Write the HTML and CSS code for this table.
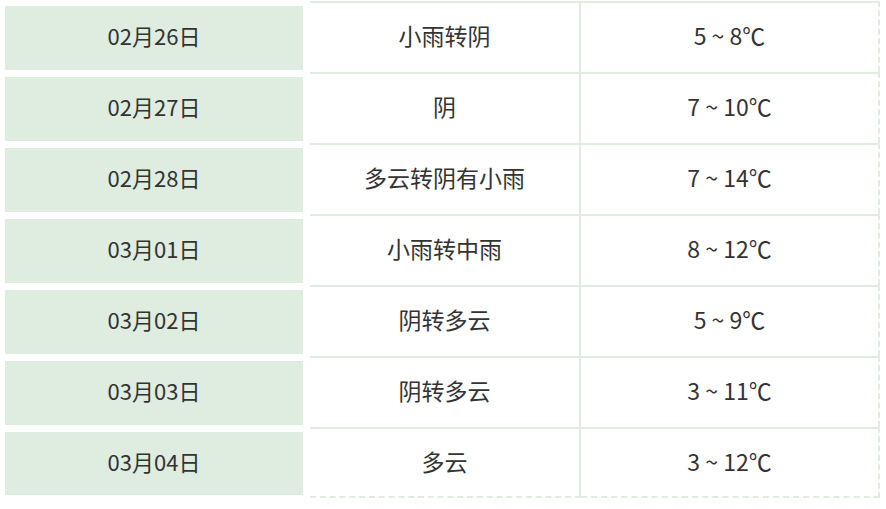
FILE: index.html
```html
<!DOCTYPE html>
<html lang="zh">
<head>
<meta charset="utf-8">
<link rel="stylesheet" href="styles.css">
</head>
<body>
<div class="table">
  <div class="row"><div class="date"><span>02月26日</span></div><div class="cell mid">小雨转阴</div><div class="cell temp">5 ~ 8℃</div></div>
  <div class="row"><div class="date"><span>02月27日</span></div><div class="cell mid">阴</div><div class="cell temp">7 ~ 10℃</div></div>
  <div class="row"><div class="date"><span>02月28日</span></div><div class="cell mid">多云转阴有小雨</div><div class="cell temp">7 ~ 14℃</div></div>
  <div class="row"><div class="date"><span>03月01日</span></div><div class="cell mid">小雨转中雨</div><div class="cell temp">8 ~ 12℃</div></div>
  <div class="row"><div class="date"><span>03月02日</span></div><div class="cell mid">阴转多云</div><div class="cell temp">5 ~ 9℃</div></div>
  <div class="row"><div class="date"><span>03月03日</span></div><div class="cell mid">阴转多云</div><div class="cell temp">3 ~ 11℃</div></div>
  <div class="row last"><div class="date"><span>03月04日</span></div><div class="cell mid">多云</div><div class="cell temp">3 ~ 12℃</div></div>
</div>
</body>
</html>
```
FILE: styles.css
```css
* { box-sizing: border-box; }
body {
  margin: 1px 0 0 0;
  background: #fff;
  font-family: "Noto Sans CJK SC", "Noto Sans", sans-serif;
  font-size: 23px;
  color: #333;
}
.table {
  width: 880px;
  display: flex;
  flex-direction: column;
}
.row {
  display: grid;
  grid-template-columns: 310px 271px 299px;
  height: 71px;
}
.date {
  padding: 5px 7px 2px 5px;
  height: 71px;
}
.date span {
  display: flex;
  align-items: center;
  justify-content: center;
  height: 100%;
  padding-bottom: 6px;
  font-size: 22px;
  background: #deede0;
}
.cell {
  display: flex;
  align-items: center;
  justify-content: center;
  padding-bottom: 5px;
  border-top: 2px solid #deede0;
}
.mid { border-right: 2px solid #deede0; }
.temp { border-right: 2px dashed #deede0; }
.last .cell { border-bottom: 2px dashed #deede0; padding-bottom: 3px; }
.last .date { padding-bottom: 3px; }
```
